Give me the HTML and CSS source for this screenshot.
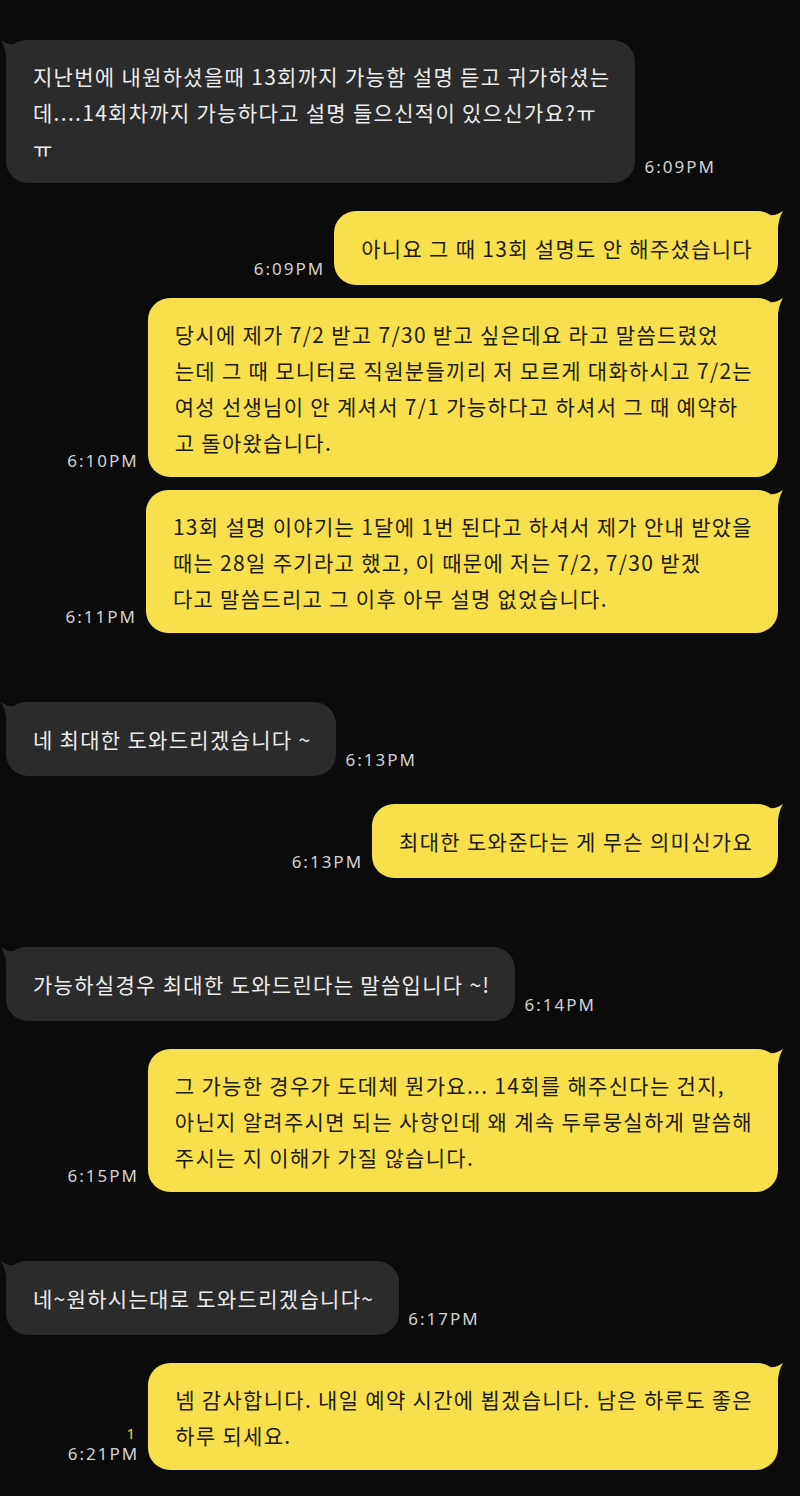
FILE: index.html
```html
<!DOCTYPE html>
<html>
    <head>
        <meta charset="UTF-8" name="viewport" content="width=device-width, initial-scale=1">
        <link rel="stylesheet" href="styles.css">
    </head>
    <body>
        <div class="chat">

            <div class="row in">
                <div class="bubble">지난번에 내원하셨을때 13회까지 가능함 설명 듣고 귀가하셨는<br>데....14회차까지 가능하다고 설명 들으신적이 있으신가요?ㅠ<br>ㅠ</div>
                <div class="meta"><span class="time">6:09PM</span></div>
            </div>

            <div class="row out near">
                <div class="meta"><span class="time">6:09PM</span></div>
                <div class="bubble">아니요 그 때 13회 설명도 안 해주셨습니다</div>
            </div>

            <div class="row out close">
                <div class="meta"><span class="time">6:10PM</span></div>
                <div class="bubble">당시에 제가 7/2 받고 7/30 받고 싶은데요 라고 말씀드렸었<br>는데 그 때 모니터로 직원분들끼리 저 모르게 대화하시고 7/2는<br>여성 선생님이 안 계셔서 7/1 가능하다고 하셔서 그 때 예약하<br>고 돌아왔습니다.</div>
            </div>

            <div class="row out close">
                <div class="meta"><span class="time">6:11PM</span></div>
                <div class="bubble">13회 설명 이야기는 1달에 1번 된다고 하셔서 제가 안내 받았을<br>때는 28일 주기라고 했고, 이 때문에 저는 7/2, 7/30 받겠<br>다고 말씀드리고 그 이후 아무 설명 없었습니다.</div>
            </div>

            <div class="row in far">
                <div class="bubble">네 최대한 도와드리겠습니다 ~</div>
                <div class="meta"><span class="time">6:13PM</span></div>
            </div>

            <div class="row out near">
                <div class="meta"><span class="time">6:13PM</span></div>
                <div class="bubble">최대한 도와준다는 게 무슨 의미신가요</div>
            </div>

            <div class="row in far">
                <div class="bubble">가능하실경우 최대한 도와드린다는 말씀입니다 ~!</div>
                <div class="meta"><span class="time">6:14PM</span></div>
            </div>

            <div class="row out near">
                <div class="meta"><span class="time">6:15PM</span></div>
                <div class="bubble">그 가능한 경우가 도데체 뭔가요... 14회를 해주신다는 건지,<br>아닌지 알려주시면 되는 사항인데 왜 계속 두루뭉실하게 말씀해<br>주시는 지 이해가 가질 않습니다.</div>
            </div>

            <div class="row in far">
                <div class="bubble">네~원하시는대로 도와드리겠습니다~</div>
                <div class="meta"><span class="time">6:17PM</span></div>
            </div>

            <div class="row out near">
                <div class="meta"><span class="unread">1</span><span class="time">6:21PM</span></div>
                <div class="bubble">넴 감사합니다. 내일 예약 시간에 뵙겠습니다. 남은 하루도 좋은<br>하루 되세요.</div>
            </div>

        </div>
    </body>
</html>
```

FILE: styles.css
```css
body {
    margin: 0;
    background-color: #0b0b0b;
    font-family: "Noto Sans CJK KR", "Noto Sans", sans-serif;
}

.chat {
    padding: 40px 22px 28px 6px;
}

/* one message with its time */
.row {
    display: flex;
    align-items: flex-end;
    gap: 9px;
}

.row.out {
    justify-content: flex-end;
}

.row.close { margin-top: 13px; }
.row.near { margin-top: 28px; }
.row.far { margin-top: 69px; }

.bubble {
    position: relative;
    box-sizing: border-box;
    min-height: 74px;
    display: flex;
    align-items: center;
    padding: 17.5px 25px 17.5px 27px;
    border-radius: 22px;
    font-size: 21px;
    line-height: 36px;
    letter-spacing: 1.3px;
    white-space: nowrap;
}

.in .bubble {
    background-color: #2b2b2b;
    color: #ececec;
    border-top-left-radius: 20px;
}

.out .bubble {
    background-color: #f8e04c;
    color: #1d1a0c;
    border-top-right-radius: 20px;
}

/* the little ear on the top corner */
.bubble::after {
    content: "";
    position: absolute;
    top: 0;
    width: 26px;
    height: 24px;
    background-color: inherit;
}

.out .bubble::after {
    right: -6px;
    clip-path: path('M2 1 Q14 8 25 0 Q19 10 20 24 L2 24 Z');
}

.in .bubble::after {
    left: -6px;
    clip-path: path('M24 1 Q12 8 1 0 Q7 10 6 24 L24 24 Z');
}

.meta {
    display: flex;
    flex-direction: column;
    align-items: flex-end;
    margin-bottom: 6px;
}

.time {
    font-family: "Noto Sans", sans-serif;
    font-size: 17px;
    line-height: 20px;
    letter-spacing: 2px;
    color: #d2d2d2;
}

.unread {
    font-family: "Noto Sans", sans-serif;
    font-size: 15px;
    line-height: 16px;
    margin-bottom: 3px;
    padding-right: 4px;
    color: #f2d83a;
}
```
